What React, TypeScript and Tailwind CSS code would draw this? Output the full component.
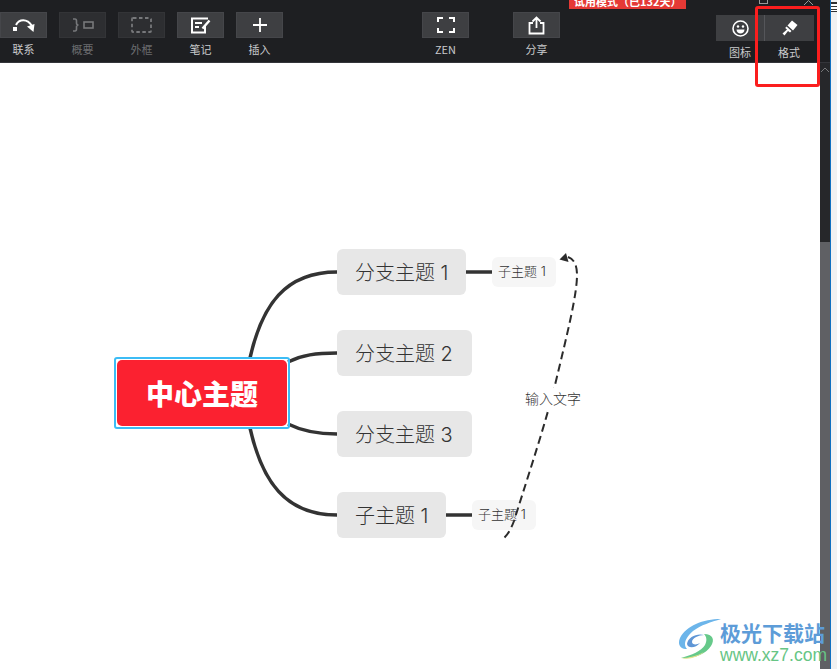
import type { ReactNode } from "react";

const CJK = "font-['Noto_Sans_CJK_SC','Liberation_Sans',sans-serif]";

function ToolButton({
  label,
  dim = false,
  className = "",
  children,
}: {
  label: string;
  dim?: boolean;
  className?: string;
  children: ReactNode;
}) {
  return (
    <div className={`flex w-[47px] shrink-0 flex-col items-center ${className}`}>
      <div
        className={`flex h-[26px] w-[47px] items-center justify-center border border-[#45464a] ${
          dim ? "border-[#333437] bg-[#2d2e31] text-[#77787b]" : "bg-[#3e3f42] text-white"
        }`}
      >
        {children}
      </div>
      <span className={`mt-[3px] text-[11px] leading-[16px] ${dim ? "text-[#6b6c6f]" : "text-[#c9cacc]"}`}>
        {label}
      </span>
    </div>
  );
}

function Node({ className, children }: { className: string; children: ReactNode }) {
  return <div className={`absolute flex items-center whitespace-pre ${className}`}>{children}</div>;
}

const nodeFont = "font-['Inter','Noto_Sans_CJK_SC',sans-serif] font-light text-[#333333]";
const branch = `h-[46px] rounded-[6px] bg-[#e7e7e7] pl-[18px] pt-[1px] text-[20px] ${nodeFont}`;
const sub = `h-[30px] w-[64px] rounded-[6px] bg-[#f6f6f6] pl-[6px] text-[13px] ${nodeFont}`;

function MindMap() {
  return (
    <div className="relative min-h-0 flex-1 bg-white">
      <svg className="absolute left-0 top-[-63px]" width="830" height="669" fill="none">
        <g stroke="#333333" strokeWidth="3.5">
          <path d="M250 358C262 305 285 272 337 272" />
          <path d="M250 428C262 481 285 515 337 515" />
          <path d="M288 362C302 355 316 353 337 353" />
          <path d="M288 424C302 431 316 434 337 434" />
          <path d="M466 272H492" />
          <path d="M446 515H472" />
        </g>
      </svg>

      <Node className={`left-[337px] top-[186px] w-[129px] ${branch}`}>分支主题 1</Node>
      <Node className={`left-[337px] top-[267px] w-[135px] ${branch}`}>分支主题 2</Node>
      <Node className={`left-[337px] top-[348px] w-[135px] ${branch}`}>分支主题 3</Node>
      <Node className={`left-[337px] top-[429px] w-[109px] ${branch}`}>子主题 1</Node>
      <Node className={`left-[492px] top-[194px] ${sub}`}>子主题 1</Node>
      <Node className={`left-[472px] top-[437px] ${sub}`}>子主题 1</Node>

      <div className="absolute left-[114px] top-[294px] h-[72px] w-[176px] rounded-[3px] border-2 border-[#3cbcf5] p-[1px]">
        <div className="flex h-full items-center justify-center rounded-[5px] bg-[#fb2130] text-[28px] font-black text-white">
          中心主题
        </div>
      </div>

      <svg className="absolute left-0 top-[-63px]" width="830" height="669" fill="none">
        <path
          d="M504.5 537.5C508 534 511 529 514 521C530 470 545 425 555 385C567 335 577 295 577 275C577 265 574 259 568 257"
          stroke="#2b2b2b"
          strokeWidth="2"
          strokeDasharray="8 4.5"
        />
        <path d="M559.5 259.5L566 253L568.5 262Z" fill="#2b2b2b" />
      </svg>
      <Node className={`left-[525px] top-[325px] h-[20px] w-[56px] bg-white text-[14px] ${nodeFont}`}>
        输入文字
      </Node>
    </div>
  );
}

function Logo() {
  return (
    <svg width="48" height="46" viewBox="0 0 48 46" fill="none" className="blur-[0.4px]">
      <path d="M44 3C26 3 9 10 3 22C0 29 4 33 10 33C6 29 8 22 16 15C24 9 34 6 44 3Z" fill="#6cb5ea" />
      <path d="M10 28C11 21 20 17 27 19C22 19 15 22 15 26C15 29 20 29 23 27C19 32 11 33 10 28Z" fill="#5f96d6" />
      <path d="M27 18C36 18 38 24 34 30C29 38 17 43 4 42C15 39 24 35 28 29C30 25 30 21 27 18Z" fill="#66c98a" />
      <path d="M4 42C12 42 20 40 27 36C21 41 12 44 4 42Z" fill="#e8e48c" />
    </svg>
  );
}

export default function App() {
  return (
    <div className={`relative flex h-[669px] w-[837px] overflow-hidden bg-white ${CJK}`}>
      <div className="flex min-w-0 flex-1 flex-col">
        <header className="relative flex h-[63px] shrink-0 border-b border-[#34353a] bg-[#1e1f22] pt-[12px]">
          <ToolButton label="联系">
            <svg width="24" height="16" viewBox="0 0 24 16" fill="none">
              <rect x="1" y="10" width="4" height="4" fill="white" />
              <path d="M4 8C7 2 15 1 20 9" stroke="white" strokeWidth="2" />
              <path d="M15 9.5L22.5 7L21.5 15Z" fill="white" />
            </svg>
          </ToolButton>
          <ToolButton label="概要" dim className="ml-[12px]">
            <svg width="22" height="14" viewBox="0 0 22 14" fill="none" stroke="currentColor" strokeWidth="1.6">
              <path d="M1 1H3C4.5 1 4.5 2 4.5 3V5C4.5 6 5 7 6.5 7C5 7 4.5 8 4.5 9V11C4.5 12 4.5 13 3 13H1" />
              <rect x="12" y="4" width="9" height="6" />
            </svg>
          </ToolButton>
          <ToolButton label="外框" dim className="ml-[12px]">
            <svg width="21" height="16" viewBox="0 0 21 16" fill="none" stroke="currentColor" strokeWidth="1.8" strokeDasharray="3.5 2.5">
              <rect x="1" y="1" width="19" height="14" rx="1" />
            </svg>
          </ToolButton>
          <ToolButton label="笔记" className="ml-[12px]">
            <svg width="21" height="17" viewBox="0 0 21 17" fill="none" stroke="white" strokeWidth="2">
              <path d="M15 8V15.5H2V1.5H18" />
              <path d="M5 6H12M5 10H9" />
              <path d="M12.5 11.5L19.5 3.5" strokeWidth="2.4" />
            </svg>
          </ToolButton>
          <ToolButton label="插入" className="ml-[12px]">
            <svg width="14" height="14" viewBox="0 0 14 14" stroke="white" strokeWidth="1.8">
              <path d="M7 0V14M0 7H14" />
            </svg>
          </ToolButton>
          <ToolButton label="ZEN" className="ml-[139px]">
            <svg width="18" height="16" viewBox="0 0 18 16" fill="none" stroke="white" strokeWidth="2">
              <path d="M1 5V1H6M12 1H17V5M17 11V15H12M6 15H1V11" />
            </svg>
          </ToolButton>
          <ToolButton label="分享" className="ml-[44px]">
            <svg width="17" height="19" viewBox="0 0 17 19" fill="none" stroke="white" strokeWidth="1.8">
              <path d="M5 7H1.5V17.5H15.5V7H12" />
              <path d="M8.5 12V1.5M4.5 5.5L8.5 1.5L12.5 5.5" />
            </svg>
          </ToolButton>

          <div className="absolute left-[569px] top-0 h-[9px] w-[117px] overflow-hidden bg-[#e53935]">
            <span className="absolute left-[5px] top-[-7px] whitespace-nowrap text-[11px] font-bold leading-[16px] text-white">
              试用模式（已132天）
            </span>
          </div>
          <div className="absolute left-[759px] top-[-5px] h-[9px] w-[9px] border border-[#9a9a9a]" />
          <svg className="absolute left-[803px] top-0" width="11" height="5" viewBox="0 0 11 5" fill="none" stroke="#9a9a9a">
            <path d="M1 5L5.5 0.5L10 5" />
          </svg>

          <div className="absolute left-[716px] top-[15px] flex">
            <div className="flex h-[26px] w-[49px] items-center justify-center border-r border-[#55565a] bg-[#3e3f42]">
              <svg width="17" height="17" viewBox="0 0 17 17" fill="none">
                <circle cx="8.5" cy="8.5" r="7.5" stroke="white" strokeWidth="1.6" />
                <circle cx="6" cy="6.5" r="1.2" fill="white" />
                <circle cx="11" cy="6.5" r="1.2" fill="white" />
                <path d="M4.5 9.5H12.5C12.5 12 10.5 13.5 8.5 13.5C6.5 13.5 4.5 12 4.5 9.5Z" fill="white" />
              </svg>
            </div>
            <div className="flex h-[26px] w-[49px] items-center justify-center bg-[#3e3f42]">
              <svg width="16" height="16" viewBox="0 0 16 16" fill="white">
                <path d="M10 0.5L15.5 5L11 10.5L5.5 5.5Z" />
                <path d="M4.5 6.5L9.5 11L8 12.5L6 11L2.5 15.5L0.5 13.5L5 9.5L3.2 8Z" />
              </svg>
            </div>
          </div>
          <span className="absolute left-[729px] top-[44px] text-[11px] leading-[16px] text-[#c9cacc]">图标</span>
          <span className="absolute left-[778px] top-[44px] text-[11px] leading-[16px] text-[#c9cacc]">格式</span>
        </header>
        <div className="flex min-h-0 flex-1">
          <div className="flex min-w-0 flex-1 flex-col">
            <MindMap />
          </div>
          <div className="flex w-[10px] shrink-0 flex-col bg-[#26272a]">
            <svg className="mt-[4px]" width="10" height="5" viewBox="0 0 10 5" fill="none" stroke="#77787b">
              <path d="M1 5L5 1L9 5" />
            </svg>
            <div className="mt-[170px] flex-1 bg-[#5f6064]" />
          </div>
        </div>
      </div>
      <div className="w-[7px] shrink-0 border-l border-[#1070c0] bg-[#f1f1f1] pt-[2px]">
        <div className="h-[10px] w-full border-y border-[#333] bg-[repeating-linear-gradient(#333_0,#333_1px,#fff_1px,#fff_3px)]" />
      </div>

      {/* red annotation box over the format button */}
      <div className="absolute left-[755px] top-[6px] h-[81px] w-[65px] rounded-[3px] border-[3px] border-[#fb1e1e]" />

      {/* watermark */}
      <div className="absolute left-[677px] top-[616px] flex items-start">
        <Logo />
        <div className="-ml-[5px] mt-[2px] flex flex-col">
          <span className="whitespace-nowrap text-[21px] font-bold leading-[28px] text-[#5d9cd8]">极光下载站</span>
          <span className="whitespace-nowrap font-['Liberation_Sans',sans-serif] text-[17.5px] leading-[19px] text-[#67c585]">
            www.xz7.com
          </span>
        </div>
      </div>
    </div>
  );
}
